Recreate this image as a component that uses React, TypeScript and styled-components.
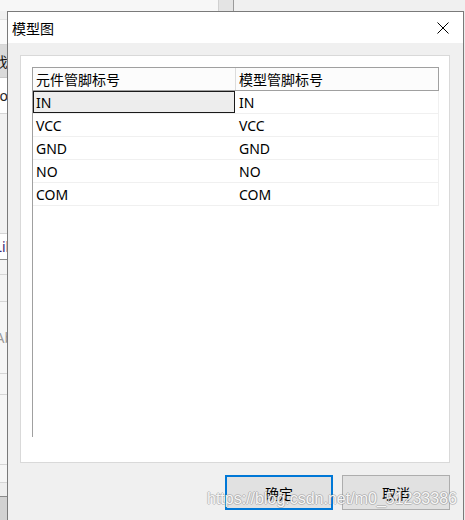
import styled, { createGlobalStyle } from 'styled-components';

const GlobalStyle = createGlobalStyle`
  html, body {
    margin: 0;
    padding: 0;
    overflow: hidden;
    background: #f0f0f0;
  }
`;

const CJK = `"Noto Sans", "Noto Sans CJK SC", sans-serif`;

type Pin = { part: string; model: string };

const pins: Pin[] = [
  { part: 'IN', model: 'IN' },
  { part: 'VCC', model: 'VCC' },
  { part: 'GND', model: 'GND' },
  { part: 'NO', model: 'NO' },
  { part: 'COM', model: 'COM' },
];

// strips of the window lying behind the dialog
type Slice = { h: number; bg: string; line?: string; text?: string; color?: string };

const leftSlices: Slice[] = [
  { h: 11, bg: '#f7f7f7' },
  { h: 9, bg: '#f0f0f0', line: '#e2e2e2' },
  { h: 25, bg: '#fafafa', line: '#d6d6d6' },
  { h: 33, bg: '#dadada', line: '#c8c8c8', text: '计划', color: '#111' },
  { h: 36, bg: '#ffffff', line: '#d6d6d6', text: 'Root', color: '#222' },
  { h: 120, bg: '#f2f2f2', line: '#d6d6d6' },
  { h: 26, bg: '#ffffff', line: '#8a8a8a', text: 'Lik', color: '#3b2a7a' },
  { h: 15, bg: '#f4f4f4', line: '#d6d6d6' },
  { h: 27, bg: '#f4f4f4', line: '#d6d6d6' },
  { h: 72, bg: '#f6f6f6', line: '#d6d6d6', text: 'Ab', color: '#9a9a9a' },
  { h: 21, bg: '#f6f6f6', line: '#d6d6d6' },
  { h: 70, bg: '#f6f6f6', line: '#d6d6d6' },
  { h: 18, bg: '#f6f6f6', line: '#d6d6d6' },
  { h: 14, bg: '#eeeeee', line: '#8a8a8a' },
  { h: 23, bg: '#d2d2d2' },
];

export default function App() {
  return (
    <>
      <GlobalStyle />
      <Desktop>
        <TopStrip>
          <TopPane $w={219} $bg="#f7f7f7" $line="#d0d0d0" />
          <TopPane $w={15} $bg="#e4e4e4" $line="#9a9a9a" />
          <TopPane $w={231} $bg="#f0f0f0" />
        </TopStrip>
        <LeftStrip>
          {leftSlices.map((s, i) => (
            <StripSlice key={i} $h={s.h} $bg={s.bg} $line={s.line} $color={s.color}>
              {s.text && <span>{s.text}</span>}
            </StripSlice>
          ))}
        </LeftStrip>
        <RightStrip />

        <Dialog>
          <TitleBar>
            <Title>模型图</Title>
            <CloseButton aria-label="关闭">
              <svg width="12" height="12" viewBox="0 0 12 12">
                <path d="M0.5 0.5 L11.5 11.5 M11.5 0.5 L0.5 11.5" stroke="#000" strokeWidth="1" fill="none" />
              </svg>
            </CloseButton>
          </TitleBar>

          <Body>
            <Panel>
              <ListView>
                <HeaderRow>
                  <HeaderCell>元件管脚标号</HeaderCell>
                  <HeaderCell>模型管脚标号</HeaderCell>
                </HeaderRow>
                {pins.map((p, i) => (
                  <Row key={p.part}>
                    <Cell $selected={i === 0}>{p.part}</Cell>
                    <Cell>{p.model}</Cell>
                  </Row>
                ))}
              </ListView>
            </Panel>

            <ButtonBar>
              <Button $primary>确定</Button>
              <Button>取消</Button>
            </ButtonBar>
          </Body>
        </Dialog>

        <Watermark>https://blog.csdn.net/m0_51233386</Watermark>
      </Desktop>
    </>
  );
}

const Desktop = styled.div`
  position: relative;
  width: 465px;
  height: 520px;
  overflow: hidden;
  background: #f0f0f0;
`;

const TopStrip = styled.div`
  position: absolute;
  left: 0;
  top: 0;
  width: 465px;
  height: 11px;
  display: flex;
`;

const TopPane = styled.div<{ $w: number; $bg: string; $line?: string }>`
  width: ${(p) => p.$w}px;
  flex-shrink: 0;
  background: ${(p) => p.$bg};
  box-sizing: border-box;
  border-right: ${(p) => (p.$line ? `1px solid ${p.$line}` : 'none')};
`;

const LeftStrip = styled.div`
  position: absolute;
  left: 0;
  top: 0;
  width: 7px;
  height: 520px;
  display: flex;
  flex-direction: column;
  overflow: hidden;
`;

const StripSlice = styled.div<{ $h: number; $bg: string; $line?: string; $color?: string }>`
  height: ${(p) => p.$h}px;
  flex-shrink: 0;
  box-sizing: border-box;
  background: ${(p) => p.$bg};
  border-bottom: ${(p) => (p.$line ? `1px solid ${p.$line}` : 'none')};
  display: flex;
  align-items: center;
  justify-content: flex-end;
  overflow: hidden;
  font-family: ${CJK};
  font-size: 14px;
  color: ${(p) => p.$color ?? '#000'};
  white-space: nowrap;

  span {
    margin-right: -6px;
  }
`;

const RightStrip = styled.div`
  position: absolute;
  right: 0;
  top: 11px;
  width: 2px;
  height: 509px;
  background: #ececec;
`;

const Dialog = styled.div`
  position: absolute;
  left: 7px;
  top: 11px;
  width: 457px;
  height: 520px;
  box-sizing: border-box;
  border: 1px solid #7a7a7a;
  background: #f0f0f0;
  display: flex;
  flex-direction: column;
`;

const TitleBar = styled.div`
  height: 31px;
  flex-shrink: 0;
  background: #ffffff;
  display: flex;
  align-items: center;
  justify-content: space-between;
  padding-left: 4px;
`;

const Title = styled.span`
  font-family: ${CJK};
  font-size: 14px;
  color: #000;
`;

const CloseButton = styled.button`
  width: 40px;
  height: 31px;
  border: none;
  background: transparent;
  padding: 0;
  display: flex;
  align-items: center;
  justify-content: center;
`;

const Body = styled.div`
  flex: 1;
  display: flex;
  flex-direction: column;
  padding: 12px 13px 0 12px;
  gap: 12px;
`;

const Panel = styled.div`
  height: 408px;
  box-sizing: border-box;
  background: #ffffff;
  border: 1px solid #d9d9d9;
  padding: 11px 10px 25px 11px;
  display: flex;
  flex-direction: column;
`;

const ListView = styled.div`
  flex: 1;
  border-left: 1px solid #a0a0a0;
  display: flex;
  flex-direction: column;
`;

const HeaderRow = styled.div`
  height: 24px;
  box-sizing: border-box;
  display: grid;
  grid-template-columns: 202px 203px;
  border-top: 1px solid #a0a0a0;
  border-bottom: 1px solid #a0a0a0;
  border-right: 1px solid #a0a0a0;
  background: #fcfcfc;
`;

const HeaderCell = styled.div`
  display: flex;
  align-items: center;
  padding-left: 3px;
  font-family: ${CJK};
  font-size: 14px;
  color: #000;
  white-space: nowrap;

  & + & {
    border-left: 1px solid #dcdcdc;
  }
`;

const Row = styled.div`
  height: 23px;
  box-sizing: border-box;
  display: grid;
  grid-template-columns: 202px 203px;
  border-bottom: 1px solid #f0f0f0;
  border-right: 1px solid #f0f0f0;
`;

const Cell = styled.div<{ $selected?: boolean }>`
  display: flex;
  align-items: center;
  box-sizing: border-box;
  padding-left: ${(p) => (p.$selected ? '2px' : '3px')};
  font-family: ${CJK};
  font-size: 14px;
  color: #000;
  background: ${(p) => (p.$selected ? '#ededed' : 'transparent')};
  border: ${(p) => (p.$selected ? '1px solid #1a1a1a' : 'none')};

  & + & {
    padding-left: 4px;
  }
`;

const ButtonBar = styled.div`
  display: flex;
  justify-content: flex-end;
  gap: 9px;
`;

const Button = styled.button<{ $primary?: boolean }>`
  width: 108px;
  height: 35px;
  box-sizing: border-box;
  background: #e1e1e1;
  border: ${(p) => (p.$primary ? '2px solid #0078d7' : '1px solid #adadad')};
  font-family: ${CJK};
  font-size: 14px;
  color: #000;
  padding: 0;
`;

const Watermark = styled.div`
  position: absolute;
  left: 207px;
  top: 490px;
  font-family: "Liberation Sans", Arial, sans-serif;
  font-size: 16px;
  line-height: 18px;
  color: rgba(255, 255, 255, 0.92);
  text-shadow:
    1px 0 0 rgba(120, 120, 120, 0.35),
    -1px 0 0 rgba(120, 120, 120, 0.35),
    0 1px 0 rgba(120, 120, 120, 0.35),
    0 -1px 0 rgba(120, 120, 120, 0.35);
  white-space: nowrap;
  pointer-events: none;
`;
